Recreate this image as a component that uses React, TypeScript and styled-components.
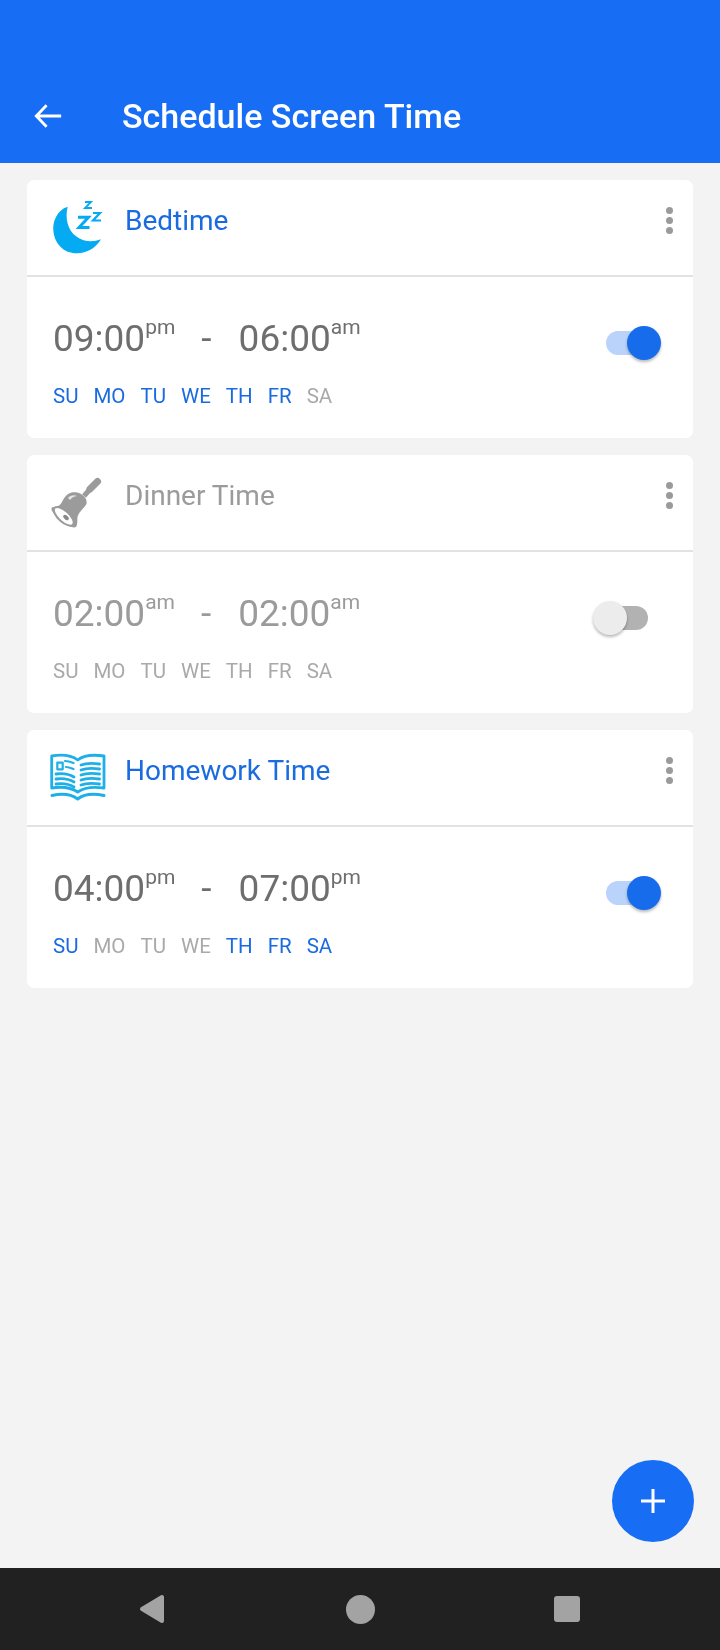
import React from "react";
import styled, { createGlobalStyle } from "styled-components";

const BLUE = "#176ef5";
const TEXT_BLUE = "#1a6be0";
const ICON_BLUE = "#04aaf2";

const GlobalStyle = createGlobalStyle`
  html, body {
    margin: 0;
    padding: 0;
    background: #f3f3f3;
    font-family: Roboto, "Liberation Sans", sans-serif;
  }
`;

const Screen = styled.div`
  position: relative;
  width: 720px;
  height: 1650px;
  display: flex;
  flex-direction: column;
  overflow: hidden;
  background: #f3f3f3;
`;

const Header = styled.header`
  height: 163px;
  box-sizing: border-box;
  padding: 86px 0 0 33px;
  display: flex;
  align-items: flex-start;
  gap: 59px;
  background: ${BLUE};
`;

const BackButton = styled.div`
  width: 30px;
  height: 60px;
  display: flex;
  align-items: center;
`;

const Title = styled.h1`
  margin: 0;
  font-size: 34px;
  line-height: 60px;
  font-weight: 500;
  color: #fff;
  will-change: transform;
`;

const List = styled.main`
  flex: 1;
  display: flex;
  flex-direction: column;
  gap: 17px;
  padding: 17px 27px 0;
  will-change: transform;
`;

const Card = styled.section`
  height: 258px;
  display: flex;
  flex-direction: column;
  border-radius: 7px;
  background: #fff;
`;

const CardHead = styled.div`
  height: 97px;
  flex: none;
  box-sizing: border-box;
  padding: 0 20px 15px 22px;
  display: flex;
  align-items: center;
  border-bottom: 2px solid #e2e2e2;
`;

const IconSlot = styled.div`
  width: 54px;
  height: 60px;
  margin-right: 22px;
  flex: none;
  align-self: flex-start;
  margin-top: 17px;
`;

const CardTitle = styled.div<{ $active: boolean }>`
  flex: 1;
  font-size: 28px;
  color: ${(p) => (p.$active ? TEXT_BLUE : "#9b9b9b")};
`;

const Dots = styled.div`
  display: flex;
  flex-direction: column;
  gap: 3px;
`;

const Dot = styled.span`
  width: 7px;
  height: 7px;
  border-radius: 50%;
  background: #9a9a9a;
`;

const CardBody = styled.div`
  flex: 1;
  display: flex;
  align-items: flex-start;
  justify-content: space-between;
  padding: 37px 0 0 26px;
`;

const Times = styled.div`
  display: flex;
  flex-direction: column;
  gap: 20px;
`;

const TimeRow = styled.div<{ $active: boolean }>`
  display: flex;
  align-items: flex-start;
  height: 50px;
  font-size: 37px;
  line-height: 50px;
  color: ${(p) => (p.$active ? "#6e6e6e" : "#9b9b9b")};
`;

const Meridiem = styled.span`
  font-size: 21px;
  line-height: 26px;
`;

const Dash = styled.span`
  margin: 0 27px 0 26px;
`;

const Days = styled.div`
  display: flex;
  gap: 15px;
`;

const DayLabel = styled.span<{ $on: boolean }>`
  font-size: 20.500px;
  line-height: 24px;
  color: ${(p) => (p.$on ? TEXT_BLUE : "#a9a9a9")};
`;

const Toggle = styled.div<{ $on: boolean }>`
  position: relative;
  width: 48px;
  height: 24px;
  margin-right: ${(p) => (p.$on ? 39 : 45)}px;
  margin-top: 17px;
  border-radius: 12px;
  background: ${(p) => (p.$on ? "#b9d3fb" : "#b2b2b2")};
`;

const Thumb = styled.span<{ $on: boolean }>`
  position: absolute;
  top: -5px;
  ${(p) => (p.$on ? "right: -7px;" : "left: -7px;")}
  width: 34px;
  height: 34px;
  border-radius: 50%;
  background: ${(p) => (p.$on ? "#176ceb" : "#ececec")};
  box-shadow: 0 2px 3px rgba(0, 0, 0, 0.28);
`;

const Fab = styled.button`
  position: absolute;
  left: 612px;
  top: 1460px;
  width: 82px;
  height: 82px;
  padding: 0;
  border: 0;
  border-radius: 50%;
  display: flex;
  align-items: center;
  justify-content: center;
  background: ${BLUE};
`;

const NavBar = styled.nav`
  height: 82px;
  flex: none;
  position: relative;
  display: flex;
  align-items: center;
  background: #212121;
  padding-left: 139px;
  box-sizing: border-box;
`;

const NavCircle = styled.span`
  width: 29px;
  height: 29px;
  margin-left: 181px;
  border-radius: 50%;
  background: #a3a3a3;
`;

const NavSquare = styled.span`
  width: 26px;
  height: 26px;
  margin-left: 179px;
  border-radius: 3px;
  background: #a3a3a3;
`;

const MoonIcon = () => (
  <svg width="54" height="60" viewBox="0 0 54 60">
    <path
      d="M18.700 9.700 C8 13 3 25 4.500 35 C6 47 15 56.500 28 56.300 C38 56 47 51 52 42.300 C44 45.500 35 45 27.700 39.700 C18 33 16 20 18.700 9.700 Z"
      fill={ICON_BLUE}
    />
    <g fill="none" stroke={ICON_BLUE}>
      <polyline points="29,20.200 39.500,20.200 30,30.500 40.500,30.500" strokeWidth="3" />
      <polyline points="44,16 51,16 44,23.500 52,23.500" strokeWidth="2.200" />
      <polyline points="36,5 42,5 36,11 43,11" strokeWidth="1.800" />
    </g>
  </svg>
);

const BellIcon = () => (
  <svg width="54" height="60" viewBox="0 0 54 60">
    <path d="M35 24 L42 16" stroke="#9b9b9b" strokeWidth="5" fill="none" />
    <path d="M41 17 L48.500 9.500" stroke="#9b9b9b" strokeWidth="7" strokeLinecap="round" fill="none" />
    <path
      d="M3.700 35 C8 36 12 33 14 28 C17 22 22 19.500 27 20.300 C33 21 38 26 37.700 31 C37 35 30 39 28.500 45 C28 49 29 52 27 55 C24 56.500 20 54 16 51.500 C10 47 6 43 3 39 C2 37 2.500 35.500 3.700 35 Z"
      fill="#9b9b9b"
    />
    <ellipse
      cx="14.800"
      cy="44.300"
      rx="12.500"
      ry="5.500"
      transform="rotate(42 14.800 44.300)"
      fill="#fff"
      stroke="#9b9b9b"
      strokeWidth="2"
    />
    <path d="M19 26 C21 23.500 25 22.500 28 24 C25 24.500 22.500 25.500 21 28 Z" fill="#e4e4e4" />
    <ellipse cx="17" cy="45.500" rx="3.200" ry="2" transform="rotate(42 17 45.500)" fill="#8a8a8a" />
  </svg>
);

const BookIcon = () => (
  <svg width="60" height="60" viewBox="0 -1 60 60">
    <g fill="none" stroke="#1db0e8" strokeWidth="2.800" strokeLinecap="round" strokeLinejoin="round">
      <path d="M28.700 12 C22 7 12 6.500 2.700 8 L2.700 40 C12 38.500 22 39.500 28.700 44 C35 39.500 45 38.500 55 40 L55 8 C45 6.500 35 7 28.700 12 Z" />
      <path d="M3 47.500 C12 45.500 22 46 28.700 51 C35 46 45 45.500 55 47.500" strokeWidth="3" />
      <rect x="8.300" y="14.700" width="5.400" height="6.600" strokeWidth="2.200" />
      <path d="M16 13 C19 13 22 14 24.500 15" strokeWidth="2.200" />
      <path d="M17 19 C19 19 22 20 24.500 21" strokeWidth="2.200" />
      <path d="M7 26 C13 25 20 26 25 29" />
      <path d="M7 31 C13 30 20 31 25 34" />
      <path d="M7 36 C13 35 20 36 25 39" />
      <path d="M32 17 C37 15 44 15 50.500 16" />
      <path d="M32 22 C37 20 44 20 50.500 21" />
      <path d="M32 27 C37 25 44 25 50.500 26" />
      <path d="M32 32 C37 30 44 30 50.500 31" />
      <path d="M32 37 C37 35 44 35 50.500 36" />
    </g>
  </svg>
);

type Schedule = {
  name: string;
  icon: React.ReactNode;
  active: boolean;
  from: [string, string];
  to: [string, string];
  days: boolean[];
};

const DAY_NAMES = ["SU", "MO", "TU", "WE", "TH", "FR", "SA"];

const schedules: Schedule[] = [
  {
    name: "Bedtime",
    icon: <MoonIcon />,
    active: true,
    from: ["09:00", "pm"],
    to: ["06:00", "am"],
    days: [true, true, true, true, true, true, false],
  },
  {
    name: "Dinner Time",
    icon: <BellIcon />,
    active: false,
    from: ["02:00", "am"],
    to: ["02:00", "am"],
    days: [false, false, false, false, false, false, false],
  },
  {
    name: "Homework Time",
    icon: <BookIcon />,
    active: true,
    from: ["04:00", "pm"],
    to: ["07:00", "pm"],
    days: [true, false, false, false, true, true, true],
  },
];

const ScheduleCard = ({ item }: { item: Schedule }) => (
  <Card>
    <CardHead>
      <IconSlot>{item.icon}</IconSlot>
      <CardTitle $active={item.active}>{item.name}</CardTitle>
      <Dots>
        <Dot />
        <Dot />
        <Dot />
      </Dots>
    </CardHead>
    <CardBody>
      <Times>
        <TimeRow $active={item.active}>
          <span>{item.from[0]}</span>
          <Meridiem>{item.from[1]}</Meridiem>
          <Dash>-</Dash>
          <span>{item.to[0]}</span>
          <Meridiem>{item.to[1]}</Meridiem>
        </TimeRow>
        <Days>
          {DAY_NAMES.map((d, i) => (
            <DayLabel key={d} $on={item.days[i]}>
              {d}
            </DayLabel>
          ))}
        </Days>
      </Times>
      <Toggle $on={item.active}>
        <Thumb $on={item.active} />
      </Toggle>
    </CardBody>
  </Card>
);

export default function App() {
  return (
    <Screen>
      <GlobalStyle />
      <Header>
        <BackButton>
          <svg width="32" height="30" viewBox="0 0 32 30">
            <path
              d="M30 15 H4 M14.500 3.500 L3.500 15 L14.500 26.500"
              fill="none"
              stroke="#fff"
              strokeWidth="3"
            />
          </svg>
        </BackButton>
        <Title>Schedule Screen Time</Title>
      </Header>
      <List>
        {schedules.map((s) => (
          <ScheduleCard key={s.name} item={s} />
        ))}
      </List>
      <Fab aria-label="Add schedule">
        <svg width="26" height="26" viewBox="0 0 26 26">
          <path d="M13 1 V25 M1 13 H25" stroke="#fff" strokeWidth="3" />
        </svg>
      </Fab>
      <NavBar>
        <svg width="26" height="30" viewBox="0 0 26 30">
          <path d="M3 15 L23 3 V27 Z" fill="#a3a3a3" stroke="#a3a3a3" strokeWidth="4" strokeLinejoin="round" />
        </svg>
        <NavCircle />
        <NavSquare />
      </NavBar>
    </Screen>
  );
}
